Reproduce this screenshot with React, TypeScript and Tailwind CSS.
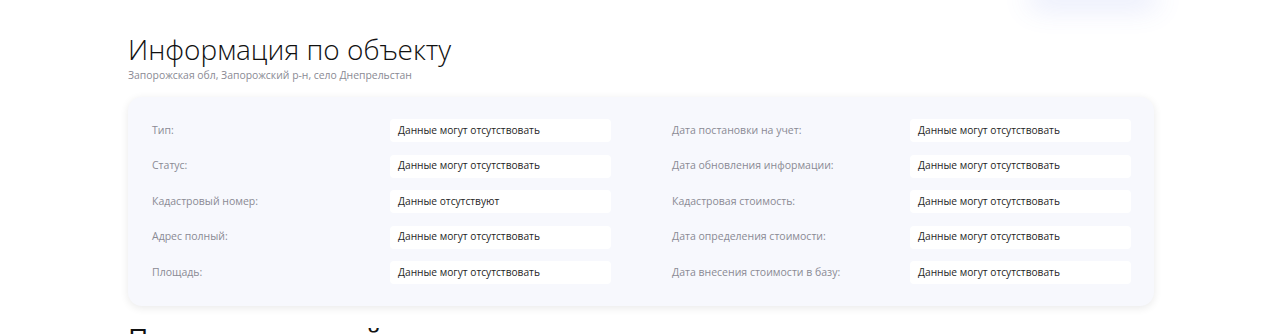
const LEFT_ROWS = [
  ["Тип:", "Данные могут отсутствовать"],
  ["Статус:", "Данные могут отсутствовать"],
  ["Кадастровый номер:", "Данные отсутствуют"],
  ["Адрес полный:", "Данные могут отсутствовать"],
  ["Площадь:", "Данные могут отсутствовать"],
];

const RIGHT_ROWS = [
  ["Дата постановки на учет:", "Данные могут отсутствовать"],
  ["Дата обновления информации:", "Данные могут отсутствовать"],
  ["Кадастровая стоимость:", "Данные могут отсутствовать"],
  ["Дата определения стоимости:", "Данные могут отсутствовать"],
  ["Дата внесения стоимости в базу:", "Данные могут отсутствовать"],
];

function InfoColumn({ rows }: { rows: string[][] }) {
  return (
    <div className="flex flex-col gap-y-[12.5px]">
      {rows.map(([label, value]) => (
        <div key={label} className="flex items-center">
          <span className="flex-1 text-[10.5px] text-[#8a8a94]">{label}</span>
          <span className="w-[221px] h-[23px] flex items-center bg-white rounded-[4px] px-2 text-[10.2px] text-[#1f1f1f]">
            {value}
          </span>
        </div>
      ))}
    </div>
  );
}

export default function App() {
  return (
    <div
      className="w-[1262px] h-[334px] overflow-hidden bg-white"
      style={{ fontFamily: '"Open Sans", "Noto Sans", sans-serif' }}
    >
      <div className="flex justify-end pr-[104px]">
        <div className="w-[130px] h-5 -mt-5 rounded-2xl bg-white shadow-[0_8px_28px_rgba(90,110,230,0.16)]" />
      </div>
      <div className="ml-[128px] w-[1026px] pt-[31px]">
        <h1 className="text-[28px] leading-[36px] font-light text-[#111]">
          Информация по объекту
        </h1>
        <p className="mt-[2px] text-[10.4px] leading-[12px] text-[#8a8a94]">
          Запорожская обл, Запорожский р-н, село Днепрельстан
        </p>
        <div className="mt-[16px] rounded-[14px] bg-[#f7f8fd] shadow-[0_2px_9px_rgba(0,0,0,0.09)] pl-6 pr-[23px] py-[22px] grid grid-cols-2 gap-x-[61px]">
          <InfoColumn rows={LEFT_ROWS} />
          <InfoColumn rows={RIGHT_ROWS} />
        </div>
        <h2 className="mt-[14px] text-[28px] leading-[36px] font-normal text-[#111]">
          Перечень записей
        </h2>
      </div>
    </div>
  );
}
